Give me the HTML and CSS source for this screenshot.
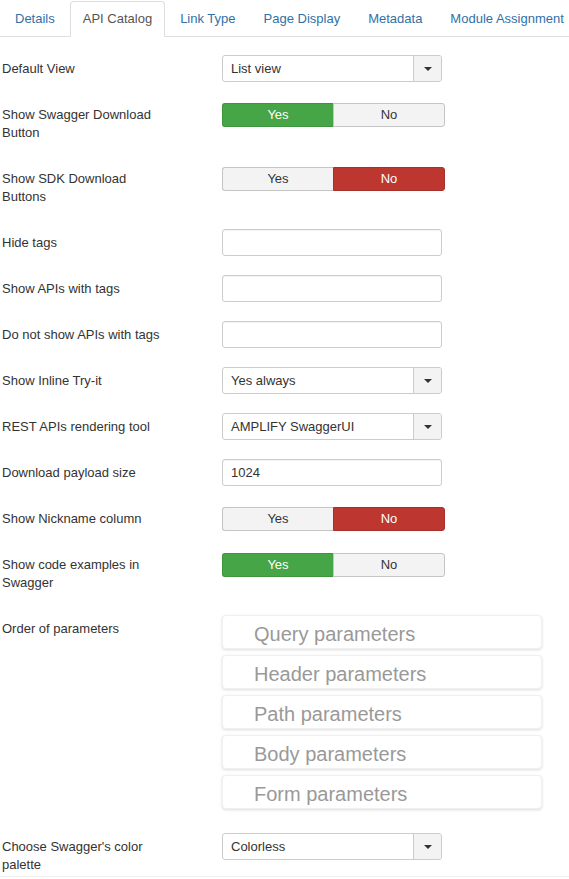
FILE: index.html
```html
<!DOCTYPE html>
<html>
<head>
<meta charset="utf-8">
<link rel="stylesheet" href="styles.css">
</head>
<body>
<div class="page">
  <ul class="tabs">
    <li><a>Details</a></li>
    <li class="active"><a>API Catalog</a></li>
    <li><a>Link Type</a></li>
    <li><a>Page Display</a></li>
    <li><a>Metadata</a></li>
    <li><a>Module Assignment</a></li>
  </ul>
  <div class="content">
    <div class="group">
      <div class="label">Default View</div>
      <div class="controls"><div class="select"><span class="val">List view</span><span class="btn"><i class="caret"></i></span></div></div>
    </div>
    <div class="group">
      <div class="label">Show Swagger Download Button</div>
      <div class="controls"><div class="toggle"><span class="opt yes on">Yes</span><span class="opt">No</span></div></div>
    </div>
    <div class="group">
      <div class="label">Show SDK Download Buttons</div>
      <div class="controls"><div class="toggle"><span class="opt">Yes</span><span class="opt no on">No</span></div></div>
    </div>
    <div class="group">
      <div class="label">Hide tags</div>
      <div class="controls"><div class="input"></div></div>
    </div>
    <div class="group">
      <div class="label">Show APIs with tags</div>
      <div class="controls"><div class="input"></div></div>
    </div>
    <div class="group">
      <div class="label">Do not show APIs with tags</div>
      <div class="controls"><div class="input"></div></div>
    </div>
    <div class="group">
      <div class="label">Show Inline Try-it</div>
      <div class="controls"><div class="select"><span class="val">Yes always</span><span class="btn"><i class="caret"></i></span></div></div>
    </div>
    <div class="group">
      <div class="label">REST APIs rendering tool</div>
      <div class="controls"><div class="select"><span class="val">AMPLIFY SwaggerUI</span><span class="btn"><i class="caret"></i></span></div></div>
    </div>
    <div class="group">
      <div class="label">Download payload size</div>
      <div class="controls"><div class="input">1024</div></div>
    </div>
    <div class="group">
      <div class="label">Show Nickname column</div>
      <div class="controls"><div class="toggle"><span class="opt">Yes</span><span class="opt no on">No</span></div></div>
    </div>
    <div class="group">
      <div class="label">Show code examples in Swagger</div>
      <div class="controls"><div class="toggle"><span class="opt yes on">Yes</span><span class="opt">No</span></div></div>
    </div>
    <div class="group">
      <div class="label">Order of parameters</div>
      <div class="controls">
        <ul class="sortable">
          <li>Query parameters</li>
          <li>Header parameters</li>
          <li>Path parameters</li>
          <li>Body parameters</li>
          <li>Form parameters</li>
        </ul>
      </div>
    </div>
    <div class="group last">
      <div class="label">Choose Swagger's color palette</div>
      <div class="controls"><div class="select"><span class="val">Colorless</span><span class="btn"><i class="caret"></i></span></div></div>
    </div>
  </div>
</div>
</body>
</html>
```

FILE: styles.css
```css
html, body {
  margin: 0;
  padding: 0;
  background: #fff;
}
body {
  font-family: "Liberation Sans", Arial, sans-serif;
  font-size: 13px;
  line-height: 18px;
  color: #333;
  overflow: hidden;
}
.page {
  padding-left: 2px;
  width: 567px;
  overflow: hidden;
}
.tabs {
  list-style: none;
  margin: 1px 0 0 -2px;
  padding: 0 0 0 2px;
  display: flex;
  white-space: nowrap;
  border-bottom: 1px solid #ddd;
}
.tabs li {
  margin: 0 2px -1px 0;
  flex: none;
}
.tabs a {
  display: block;
  padding: 8px 12px;
  line-height: 18px;
  color: #3071a9;
  border: 1px solid transparent;
  border-radius: 4px 4px 0 0;
}
.tabs .active a {
  color: #555;
  background: #fff;
  border-color: #ddd #ddd transparent #ddd;
}
.content {
  padding: 17px 0 0 2px;
  margin-left: -2px;
  border-bottom: 1px solid #eee;
}
.group {
  display: flex;
  align-items: flex-start;
  margin-bottom: 18px;
}
.group.last {
  margin-bottom: 0;
}
.group.last .label {
  padding-bottom: 2px;
}
.label {
  width: 160px;
  flex: none;
  padding: 6px 0 4px;
  margin-right: 60px;
}
.controls {
  flex: none;
}
.select {
  margin-top: 1px;
  width: 220px;
  height: 27px;
  box-sizing: border-box;
  border: 1px solid #ccc;
  border-radius: 3px;
  display: flex;
  background: #fff;
}
.select .val {
  flex: 1;
  padding-left: 8px;
  line-height: 25px;
}
.select .btn {
  width: 27px;
  border-left: 1px solid #ccc;
  background: #f3f3f3;
  border-radius: 0 2px 2px 0;
  display: flex;
  align-items: center;
  justify-content: center;
}
.caret {
  width: 0;
  height: 0;
  border-left: 4px solid transparent;
  border-right: 4px solid transparent;
  border-top: 4px solid #333;
}
.input {
  margin-top: 1px;
  width: 220px;
  height: 27px;
  box-sizing: border-box;
  border: 1px solid #ccc;
  border-radius: 3px;
  padding-left: 8px;
  line-height: 25px;
  box-shadow: inset 0 1px 1px rgba(0, 0, 0, 0.05);
}
.toggle {
  margin-top: 3px;
  width: 223px;
  height: 24px;
  display: flex;
}
.opt {
  flex: 1;
  box-sizing: border-box;
  text-align: center;
  line-height: 22px;
  background: #f3f3f3;
  border: 1px solid #c4c4c4;
  color: #333;
}
.opt:first-child {
  border-radius: 3px 0 0 3px;
  border-right: none;
}
.opt:last-child {
  border-radius: 0 3px 3px 0;
}
.opt.yes.on {
  background: #46a546;
  border-color: #3e933e;
  color: #fff;
}
.opt.no.on {
  background: #bd362f;
  border-color: #a8302a;
  color: #fff;
}
.sortable {
  list-style: none;
  margin: 1px 0 5px 0;
  padding: 0;
  display: flex;
  flex-direction: column;
  gap: 6px;
}
.sortable li {
  width: 320px;
  height: 34px;
  box-sizing: border-box;
  padding: 7px 0 0 31px;
  font-size: 20px;
  line-height: 23px;
  color: #999;
  background: #fff;
  border: 1px solid #f0f0f0;
  border-radius: 4px;
  box-shadow: 0 1px 3px rgba(0, 0, 0, 0.14);
}
```
